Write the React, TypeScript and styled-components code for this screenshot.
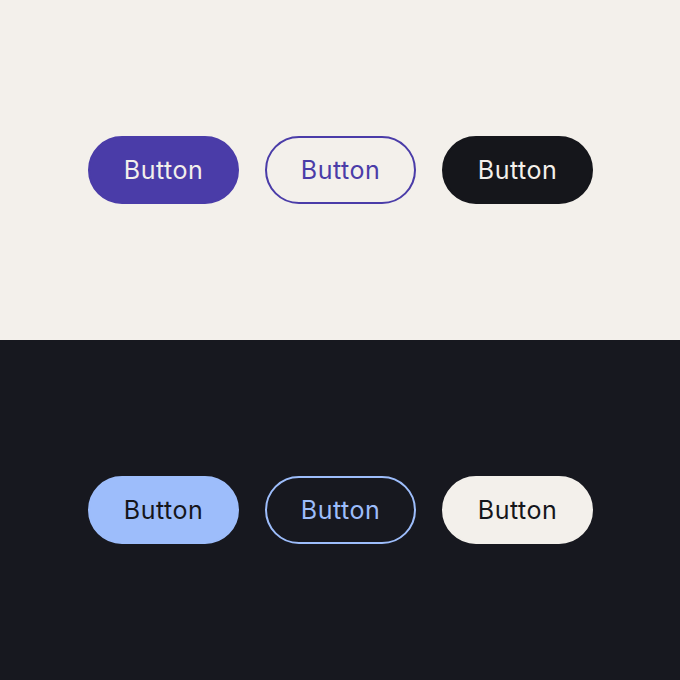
import styled, { createGlobalStyle } from "styled-components";

const GlobalStyle = createGlobalStyle`
  html, body {
    margin: 0;
    padding: 0;
  }
  body {
    font-family: Inter, "Noto Sans", sans-serif;
  }
`;

const Page = styled.div`
  width: 680px;
  height: 680px;
  display: flex;
  flex-direction: column;
`;

const Panel = styled.section<{ $dark?: boolean }>`
  flex: 1;
  display: flex;
  align-items: center;
  justify-content: center;
  gap: 26px;
  background: ${(p) => (p.$dark ? "#17181f" : "#f3f0eb")};
`;

type Variant = "filled" | "outline" | "contrast";

const palettes = {
  light: { accent: "#4a3ca8", filledText: "#f3f0eb", contrastBg: "#15161b", contrastText: "#f3f0eb" },
  dark: { accent: "#9dbdfb", filledText: "#15161b", contrastBg: "#f3f0eb", contrastText: "#15161b" },
};

const Button = styled.button<{ $variant: Variant; $tone: "light" | "dark" }>`
  box-sizing: border-box;
  width: 151px;
  height: 68px;
  padding: 0 0 0 1px;
  border-radius: 34px;
  font-family: Inter, "Noto Sans", sans-serif;
  font-size: 25px;
  font-weight: 400;
  letter-spacing: 0.5px;
  cursor: pointer;
  border: 2px solid transparent;
  ${({ $variant, $tone }) => {
    const c = palettes[$tone];
    if ($variant === "filled")
      return `background: ${c.accent}; border-color: ${c.accent}; color: ${c.filledText};`;
    if ($variant === "outline")
      return `background: transparent; border-color: ${c.accent}; color: ${c.accent};`;
    return `background: ${c.contrastBg}; border-color: ${c.contrastBg}; color: ${c.contrastText};`;
  }}
`;

const variants: Variant[] = ["filled", "outline", "contrast"];

function App() {
  return (
    <Page>
      <GlobalStyle />
      <Panel>
        {variants.map((v) => (
          <Button key={v} $variant={v} $tone="light">
            Button
          </Button>
        ))}
      </Panel>
      <Panel $dark>
        {variants.map((v) => (
          <Button key={v} $variant={v} $tone="dark">
            Button
          </Button>
        ))}
      </Panel>
    </Page>
  );
}

export default App;
